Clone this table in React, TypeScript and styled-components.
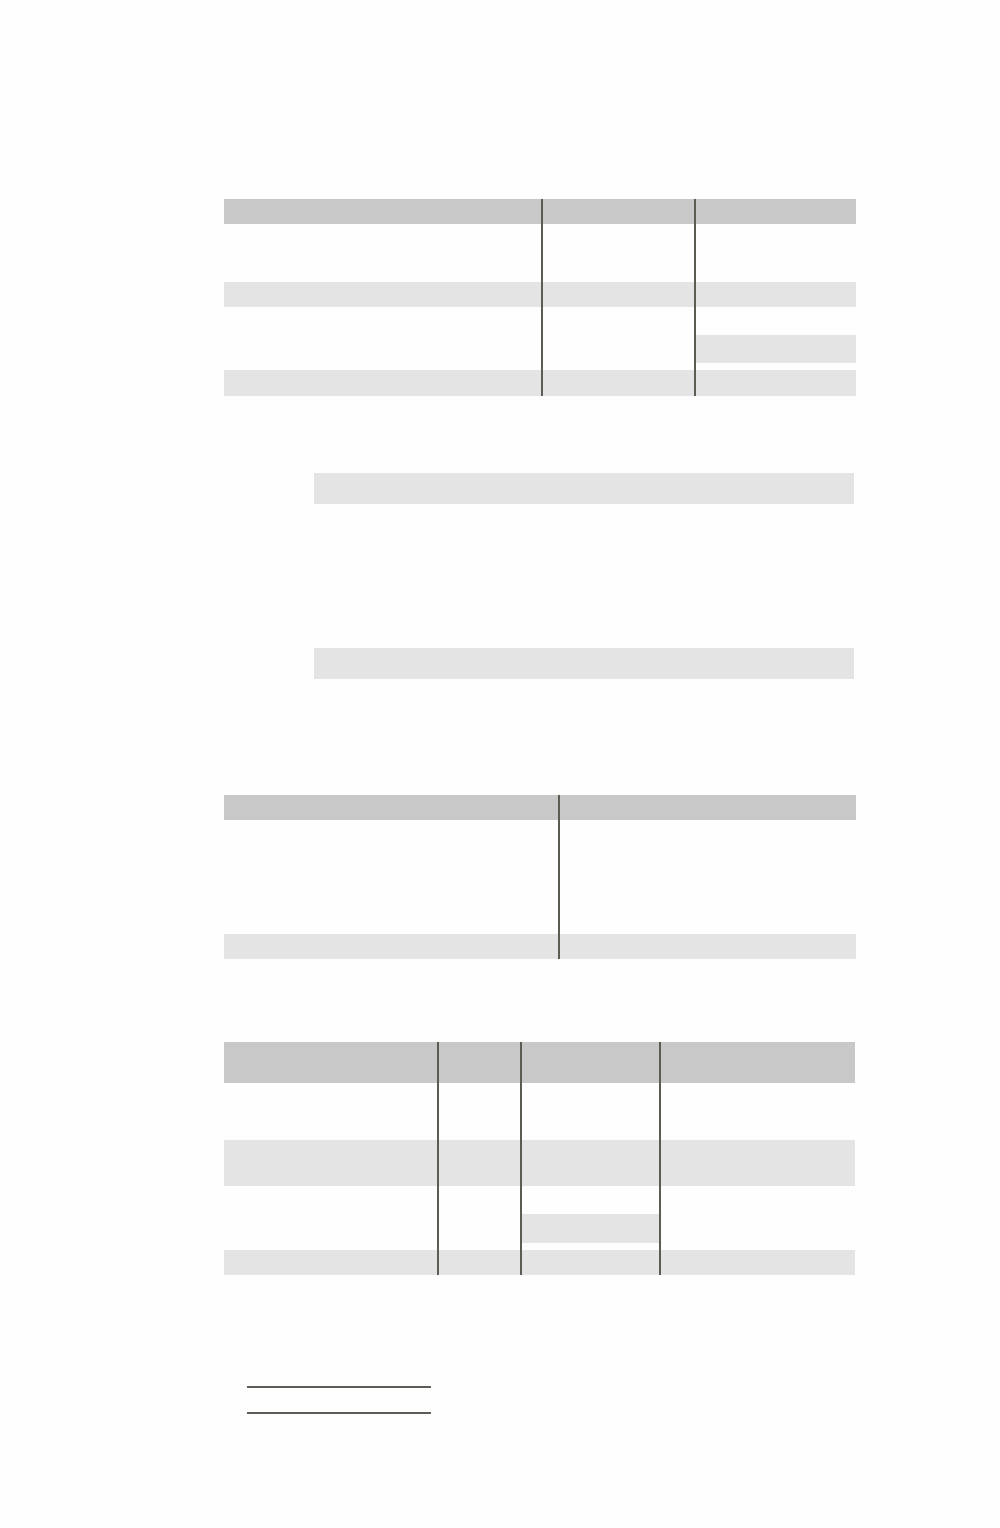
import styled, { createGlobalStyle } from 'styled-components'

type Tone = 'head' | 'shade' | 'plain'

type Row = {
  h: number
  tone: Tone
  inset?: { col: number; top: number; h: number }
}

type Grid = {
  id: string
  cols: string
  gap: number
  rows: Row[]
}

const tones: Record<Tone, string> = {
  head: '#c8c8c8',
  shade: '#e4e4e4',
  plain: 'transparent'
}

const topTables: Grid[] = [
  {
    id: 'summary',
    cols: '317px 153px 162px',
    gap: 0,
    rows: [
      { h: 25, tone: 'head' },
      { h: 58, tone: 'plain' },
      { h: 25, tone: 'shade' },
      { h: 63, tone: 'plain', inset: { col: 2, top: 28, h: 28 } },
      { h: 26, tone: 'shade' }
    ]
  }
]

const bottomTables: Grid[] = [
  {
    id: 'pair',
    cols: '334px 298px',
    gap: 116,
    rows: [
      { h: 25, tone: 'head' },
      { h: 114, tone: 'plain' },
      { h: 25, tone: 'shade' }
    ]
  },
  {
    id: 'detail',
    cols: '213px 83px 139px 196px',
    gap: 83,
    rows: [
      { h: 41, tone: 'head' },
      { h: 57, tone: 'plain' },
      { h: 46, tone: 'shade' },
      { h: 64, tone: 'plain', inset: { col: 2, top: 28, h: 29 } },
      { h: 25, tone: 'shade' }
    ]
  }
]

const TableGrid: React.FC<{ grid: Grid }> = ({ grid }) => {
  const count = grid.cols.split(' ').length
  return (
    <Table $cols={grid.cols} $gap={grid.gap}>
      {grid.rows.map((row, r) =>
        Array.from({ length: count }).map((_, c) => (
          <Cell key={`${r}-${c}`} $tone={row.tone} $h={row.h} $divided={c > 0}>
            {row.inset && row.inset.col === c && (
              <Inset $top={row.inset.top} $h={row.inset.h} />
            )}
          </Cell>
        ))
      )}
    </Table>
  )
}

const App: React.FC = () => (
  <>
    <GlobalStyle />
    <Page>
      {topTables.map(t => <TableGrid key={t.id} grid={t} />)}
      <Bars>
        <Bar />
        <Bar />
      </Bars>
      {bottomTables.map(t => <TableGrid key={t.id} grid={t} />)}
      <Signatures>
        <SignLine />
        <SignLine />
      </Signatures>
    </Page>
  </>
)

export default App

const GlobalStyle = createGlobalStyle`
  html, body {
    margin: 0;
    padding: 0;
    background: #fefefe;
    font-family: "Liberation Sans", Arial, sans-serif;
  }
  * {
    box-sizing: border-box;
  }
`
const Page = styled.div`
  display: flex;
  flex-direction: column;
  width: 1000px;
  min-height: 1528px;
  padding-top: 199px;
`
const Table = styled.div<{ $cols: string; $gap: number }>`
  display: grid;
  grid-template-columns: ${p => p.$cols};
  margin-top: ${p => p.$gap}px;
  margin-left: 224px;
  width: max-content;
`
const Cell = styled.div<{ $tone: Tone; $h: number; $divided: boolean }>`
  height: ${p => p.$h}px;
  background: ${p => tones[p.$tone]};
  border-left: ${p => (p.$divided ? '2px solid #5e5b53' : 'none')};
`
const Inset = styled.div<{ $top: number; $h: number }>`
  margin-top: ${p => p.$top}px;
  height: ${p => p.$h}px;
  background: #e4e4e4;
`
const Bars = styled.div`
  display: flex;
  flex-direction: column;
  gap: 144px;
  margin-top: 77px;
  margin-left: 314px;
  width: 540px;
`
const Bar = styled.div`
  height: 31px;
  background: #e4e4e4;
`
const Signatures = styled.div`
  display: flex;
  flex-direction: column;
  gap: 24px;
  margin-top: 111px;
  margin-left: 247px;
  width: 184px;
`
const SignLine = styled.div`
  height: 2px;
  background: #5e5c54;
`
